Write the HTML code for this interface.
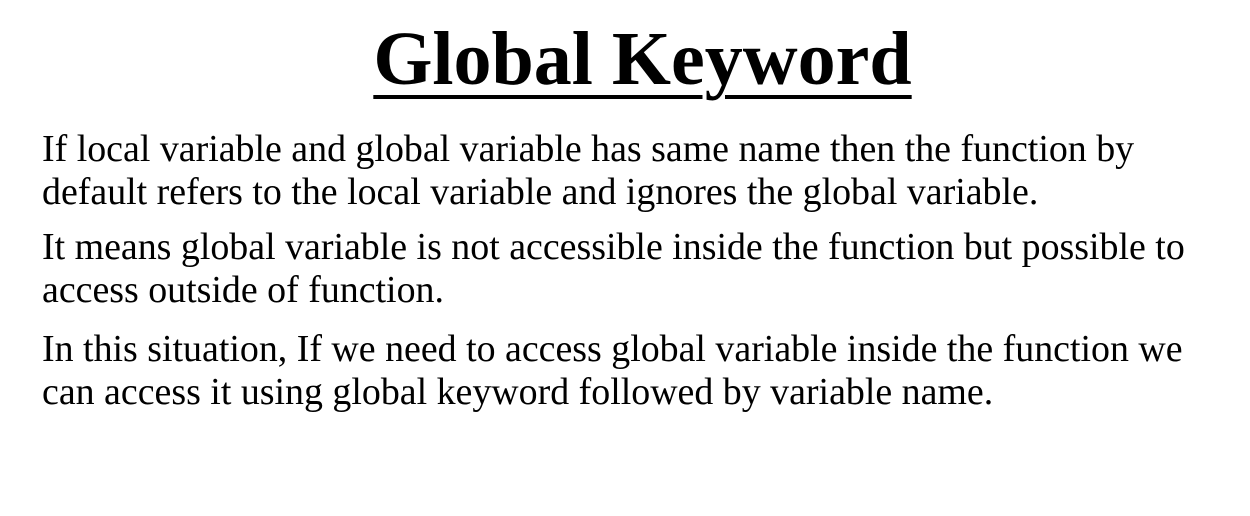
<!DOCTYPE html>
<html><head><meta charset="utf-8"><style>
html,body{margin:0;padding:0;background:#fff;width:1250px;height:516px;overflow:hidden}
body{font-family:"Liberation Serif",serif;color:#000;position:relative}
h1{position:absolute;left:0;width:1285px;text-align:center;top:17px;margin:0;font-size:76px;font-weight:bold;text-decoration:underline;text-decoration-thickness:4px;text-underline-offset:11px;line-height:84px}
.p{position:absolute;left:42px;margin:0;font-size:37.9px;line-height:43px;white-space:nowrap}
</style></head><body>
<h1>Global Keyword</h1>
<div class="p" style="top:128px">If local variable and global variable has same name then the function by<br>default refers to the local variable and ignores the global variable.</div>
<div class="p" style="top:226px">It means global variable is not accessible inside the function but possible to<br>access outside of function.</div>
<div class="p" style="top:328px">In this situation, If we need to access global variable inside the function we<br>can access it using global keyword followed by variable name.</div>
</body></html>
